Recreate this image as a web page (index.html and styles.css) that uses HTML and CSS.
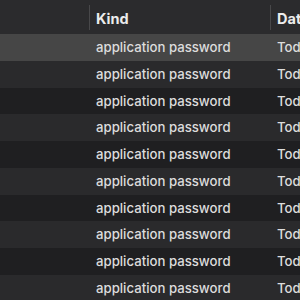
FILE: index.html
```html
<!DOCTYPE html>
<html lang="en">
<head>
    <meta charset="UTF-8">
    <meta name="viewport" content="width=device-width, initial-scale=1.0">
    <title>Keychain Access</title>
    <link rel="stylesheet" href="styles.css">
</head>
<body>
    <div class="list">
        <div class="list-header">
            <div class="col col-name"></div>
            <div class="col col-kind">Kind</div>
            <div class="col col-date">Date Modified</div>
        </div>

        <!-- Строки списка -->
        <div class="row selected">
            <div class="cell"></div>
            <div class="cell">application password</div>
            <div class="cell">Today, 10:42</div>
        </div>
        <div class="row">
            <div class="cell"></div>
            <div class="cell">application password</div>
            <div class="cell">Today, 10:41</div>
        </div>
        <div class="row">
            <div class="cell"></div>
            <div class="cell">application password</div>
            <div class="cell">Today, 10:41</div>
        </div>
        <div class="row">
            <div class="cell"></div>
            <div class="cell">application password</div>
            <div class="cell">Today, 10:40</div>
        </div>
        <div class="row">
            <div class="cell"></div>
            <div class="cell">application password</div>
            <div class="cell">Today, 10:40</div>
        </div>
        <div class="row">
            <div class="cell"></div>
            <div class="cell">application password</div>
            <div class="cell">Today, 10:39</div>
        </div>
        <div class="row">
            <div class="cell"></div>
            <div class="cell">application password</div>
            <div class="cell">Today, 10:39</div>
        </div>
        <div class="row">
            <div class="cell"></div>
            <div class="cell">application password</div>
            <div class="cell">Today, 10:38</div>
        </div>
        <div class="row">
            <div class="cell"></div>
            <div class="cell">application password</div>
            <div class="cell">Today, 10:38</div>
        </div>
        <div class="row">
            <div class="cell"></div>
            <div class="cell">application password</div>
            <div class="cell">Today, 10:37</div>
        </div>
    </div>
</body>
</html>
```

FILE: styles.css
```css
body {
    margin: 0;
    padding: 0;
    background-color: #1e1e20;
    font-family: Inter, "Liberation Sans", sans-serif;
    overflow: hidden;
}
.list {
    width: 300px;
    height: 300px;
    overflow: hidden;
}
.list-header, .row {
    display: grid;
    grid-template-columns: 89px 181px 120px;
    white-space: nowrap;
}
.list-header {
    height: 34px;
    background-color: #2b2b2d;
    align-items: center;
}
.col {
    height: 25px;
    line-height: 27px;
    padding-left: 6px;
    border-left: 1px solid #48484a;
    color: #ececec;
    font-size: 14.5px;
    font-weight: bold;
    overflow: hidden;
}
.col-name {
    border-left: none;
}
.row {
    height: 26.75px;
    line-height: 27px;
    font-size: 13.2px;
    font-weight: 500;
    color: #dcdcdc;
}
.row:nth-child(odd) {
    background-color: #2a2a2c;
}
.row:nth-child(even) {
    background-color: #1f1f21;
}
.row.selected {
    background-color: #464646;
}
.cell {
    padding-left: 7px;
    overflow: hidden;
}
.cell:first-child {
    padding-left: 0;
}
```
